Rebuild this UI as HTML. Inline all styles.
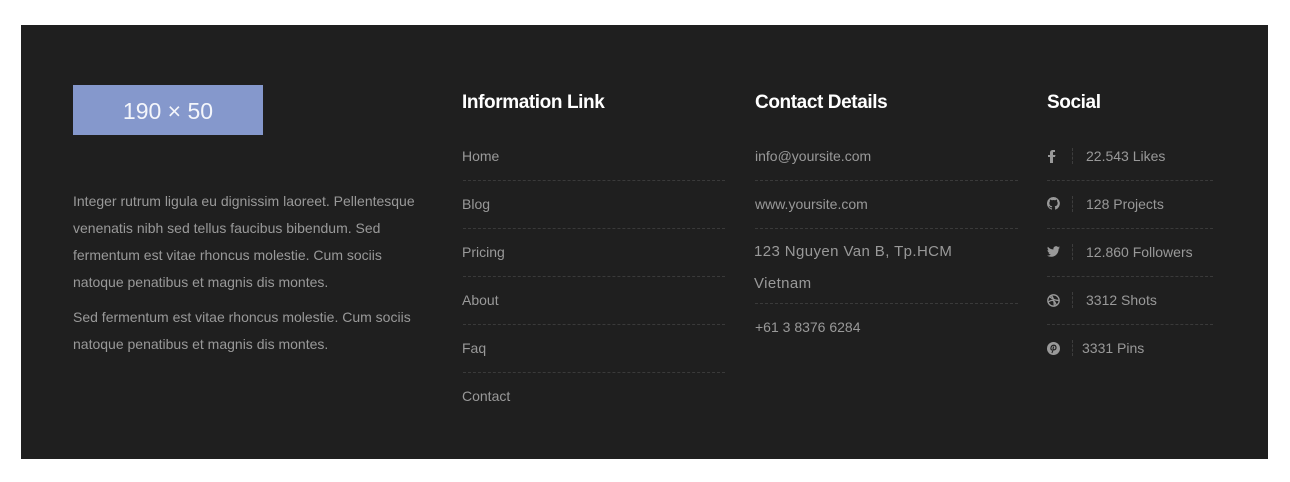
<!DOCTYPE html>
<html><head><style>
body{margin:0;width:1290px;height:482px;background:#fff;position:relative;font-family:"Liberation Sans",sans-serif;overflow:hidden}
.p{position:absolute;left:21px;top:25px;width:1247px;height:434px;background:#1f1f1f}
.a{position:absolute;color:#999;font-size:14px;white-space:nowrap;line-height:20px}
h3{position:absolute;margin:0;color:#fff;font-size:19px;font-weight:bold;line-height:24px;letter-spacing:-0.4px}
.d{position:absolute;height:0;border-top:1px dashed #3a3a3a}
.logo{position:absolute;left:73px;top:85px;width:190px;height:50px;background:#8598cc;color:#f4f6fb;font-size:23px;text-align:center;line-height:52px;font-weight:300}
.v{position:absolute;left:1072px;height:16px;border-left:1px dashed #3d3d3d}
svg{position:absolute}
</style></head><body>
<div class="p"></div>
<div class="logo">190 × 50</div>
<div class="a" style="left:73px;top:188px;line-height:27px;white-space:normal;width:358px">Integer rutrum ligula eu dignissim laoreet. Pellentesque venenatis nibh sed tellus faucibus bibendum. Sed fermentum est vitae rhoncus molestie. Cum sociis natoque penatibus et magnis dis montes.</div>
<div class="a" style="left:73px;top:304px;line-height:27px;white-space:normal;width:358px">Sed fermentum est vitae rhoncus molestie. Cum sociis natoque penatibus et magnis dis montes.</div>

<h3 style="left:462px;top:91px">Information Link</h3>
<div class="a" style="left:462px;top:146px">Home</div>
<div class="a" style="left:462px;top:194px">Blog</div>
<div class="a" style="left:462px;top:242px">Pricing</div>
<div class="a" style="left:462px;top:290px">About</div>
<div class="a" style="left:462px;top:338px">Faq</div>
<div class="a" style="left:462px;top:386px">Contact</div>
<div class="d" style="left:463px;width:262px;top:180px"></div>
<div class="d" style="left:463px;width:262px;top:228px"></div>
<div class="d" style="left:463px;width:262px;top:276px"></div>
<div class="d" style="left:463px;width:262px;top:324px"></div>
<div class="d" style="left:463px;width:262px;top:372px"></div>

<h3 style="left:755px;top:91px">Contact Details</h3>
<div class="a" style="left:755px;top:146px">info@yoursite.com</div>
<div class="a" style="left:755px;top:194px">www.yoursite.com</div>
<div class="a" style="left:754px;top:242px;font-size:15px;letter-spacing:0.4px">123 Nguyen Van B, Tp.HCM</div>
<div class="a" style="left:754px;top:274px;font-size:15px;letter-spacing:0.4px">Vietnam</div>
<div class="a" style="left:755px;top:317px">+61 3 8376 6284</div>
<div class="d" style="left:755px;width:263px;top:180px"></div>
<div class="d" style="left:755px;width:263px;top:228px"></div>
<div class="d" style="left:755px;width:263px;top:303px"></div>

<h3 style="left:1047px;top:91px">Social</h3>
<div class="a" style="left:1086px;top:146px">22.543 Likes</div>
<div class="a" style="left:1086px;top:194px">128 Projects</div>
<div class="a" style="left:1086px;top:242px">12.860 Followers</div>
<div class="a" style="left:1086px;top:290px">3312 Shots</div>
<div class="a" style="left:1082px;top:338px">3331 Pins</div>
<div class="v" style="top:148px"></div><div class="v" style="top:196px"></div><div class="v" style="top:244px"></div><div class="v" style="top:292px"></div><div class="v" style="top:340px"></div>
<div class="d" style="left:1047px;width:166px;top:180px"></div>
<div class="d" style="left:1047px;width:166px;top:228px"></div>
<div class="d" style="left:1047px;width:166px;top:276px"></div>
<div class="d" style="left:1047px;width:166px;top:324px"></div>
<svg style="left:1047px;top:149px" width="10" height="14" viewBox="0 0 10 14"><path d="M3 14V8H1V6h2V4c0-2 1-3 3-3h2v2H6.5C6 3 6 3.4 6 4v2h2.5L8 8H6v6z" fill="#999"/></svg>
<svg style="left:1047px;top:197px" width="13" height="13" viewBox="0 0 16 16"><path fill="#999" d="M8 0a8 8 0 0 0-2.5 15.6c.4 0 .5-.2.5-.4v-1.5c-2.2.5-2.7-1-2.7-1-.4-.9-.9-1.2-.9-1.2-.7-.5.1-.5.1-.5.8.1 1.2.8 1.2.8.7 1.3 1.9.9 2.3.7.1-.5.3-.9.5-1.1-1.8-.2-3.6-.9-3.6-4 0-.9.3-1.6.8-2.1-.1-.2-.4-1 .1-2.1 0 0 .7-.2 2.2.8a7.5 7.5 0 0 1 4 0c1.5-1 2.2-.8 2.2-.8.4 1.1.2 1.9.1 2.1.5.6.8 1.3.8 2.1 0 3.1-1.9 3.8-3.6 4 .3.3.5.8.5 1.5v2.2c0 .2.1.5.6.4A8 8 0 0 0 8 0z"/></svg>
<svg style="left:1047px;top:246px" width="13" height="11" viewBox="0 0 16 13"><path fill="#999" d="M16 1.5a6.6 6.6 0 0 1-1.9.5A3.3 3.3 0 0 0 15.6.2a6.6 6.6 0 0 1-2.1.8A3.3 3.3 0 0 0 7.9 4 9.3 9.3 0 0 1 1.1.6a3.3 3.3 0 0 0 1 4.4A3.3 3.3 0 0 1 .6 4.6a3.3 3.3 0 0 0 2.6 3.2 3.3 3.3 0 0 1-1.5.1 3.3 3.3 0 0 0 3.1 2.3A6.6 6.6 0 0 1 0 11.5 9.3 9.3 0 0 0 5 13c6 0 9.3-5 9.3-9.3v-.4A6.7 6.7 0 0 0 16 1.5z"/></svg>
<svg style="left:1047px;top:294px" width="13" height="13" viewBox="0 0 16 16"><g fill="none" stroke="#999" stroke-width="1.6"><circle cx="8" cy="8" r="7"/><path d="M3 3c3 3 6 5 12 5M1.5 10c4-3 8-4 10 4.5M5 1.5c3 3 4 7 4 13.5"/></g></svg>
<svg style="left:1047px;top:342px" width="13" height="13" viewBox="0 0 16 16"><circle cx="8" cy="8" r="8" fill="#999"/><path d="M7.5 9c-.4 2-.8 3.5-1.5 4.5M6 10C4 9 4.5 4 8.5 4c3 0 3.5 4.5 1 5.5-1.5.5-2.2-.5-2-1.5l.6-2.5" fill="none" stroke="#1f1f1f" stroke-width="1.4"/></svg>
</body></html>
